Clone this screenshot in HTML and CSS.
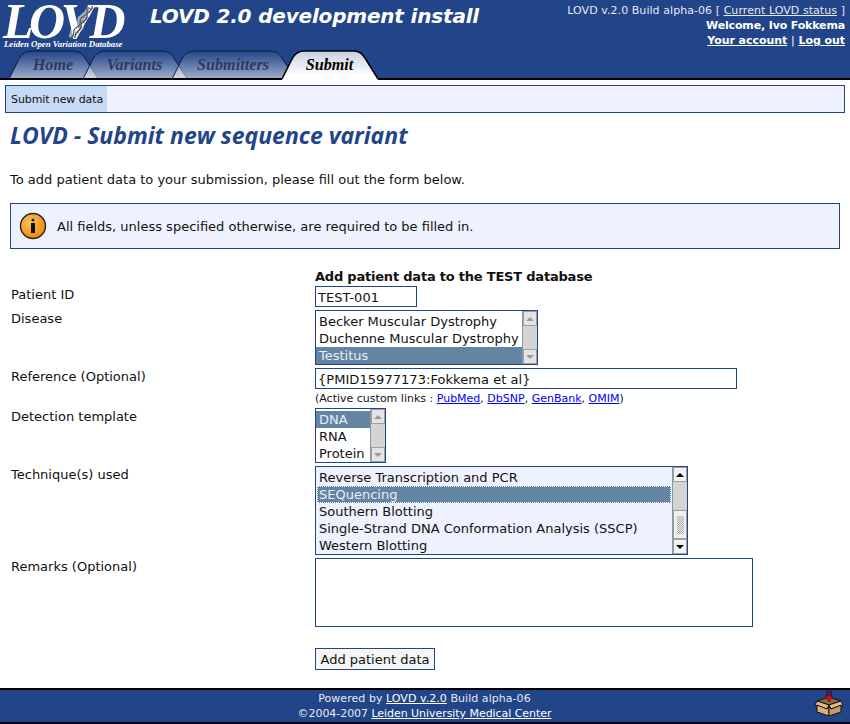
FILE: index.html
```html
<!DOCTYPE html>
<html lang="en">
<head>
<meta charset="utf-8">
<title>LOVD - Submit new sequence variant</title>
<link rel="stylesheet" href="styles.css">
</head>
<body>
<header class="header">
  <div class="header-top">
    <div class="logo">
      <div class="logo-word">LOVD</div>
      <svg class="helix" width="28" height="38" viewBox="0 0 28 38">
        <path d="M23 3L19 11L13 16L12 24L6 28L4 35" fill="none" stroke="#fff" stroke-width="7" opacity="0.550"/>
        <path d="M24 3C26 8 18 8 19 13C20 18 12 18 13 23C14 28 6 28 7 35" fill="none" stroke="#333" stroke-width="1.200"/>
        <path d="M20 2C15 6 24 9 16 13C8 17 16 21 9 24C2 28 9 31 3 35" fill="none" stroke="#555" stroke-width="1.200"/>
        <path d="M20 5l4 1M18 9l4 1M15 14l4 1M13 19l4 1M10 24l4 1M7 29l4 1" stroke="#777" stroke-width="1"/>
      </svg>
      <div class="logo-sub">Leiden Open Variation Database</div>
    </div>
    <div class="site-title">LOVD 2.0 development install</div>
    <div class="user-info">
      <div>LOVD v.2.0 Build alpha-06 [ <a href="#">Current LOVD status</a> ]</div>
      <div class="strong">Welcome, Ivo Fokkema</div>
      <div class="strong strong-links"><a href="#">Your account</a> <span class="sep">|</span> <a href="#">Log out</a></div>
    </div>
  </div>
  <nav class="tabs">
    <a class="tab tab-home" href="#">
      <svg class="tab-bg" width="89" height="28" viewBox="0 0 89 28">
        <defs><linearGradient id="g1" x1="0" y1="0" x2="0" y2="1"><stop offset="0" stop-color="#fff" stop-opacity="0"/><stop offset="1" stop-color="#fff" stop-opacity="0.550"/></linearGradient></defs>
        <path d="M0.500 28L10 9Q14 1 22 1H65Q72 1 76 8L88.500 28" fill="url(#g1)" stroke="#0d1c3d" stroke-width="1"/>
      </svg>
      <span>Home</span>
    </a>
    <a class="tab tab-variants" href="#">
      <svg class="tab-bg" width="104" height="28" viewBox="0 0 104 28">
        <path d="M0.500 28L10 9Q14 1 22 1H80Q87 1 91 8L103.500 28" fill="url(#g1)" stroke="#0d1c3d" stroke-width="1"/>
      </svg>
      <span>Variants</span>
    </a>
    <a class="tab tab-submitters" href="#">
      <svg class="tab-bg" width="123" height="28" viewBox="0 0 123 28">
        <path d="M0.500 28L10 9Q14 1 22 1H99Q106 1 110 8L122.500 28" fill="url(#g1)" stroke="#0d1c3d" stroke-width="1"/>
      </svg>
      <span>Submitters</span>
    </a>
    <a class="tab tab-submit" href="#">
      <svg class="tab-bg" width="96" height="30" viewBox="0 0 96 30">
        <defs><linearGradient id="g2" x1="0" y1="0" x2="0" y2="1"><stop offset="0" stop-color="#c6d0e4"/><stop offset="0.850" stop-color="#ffffff"/></linearGradient></defs>
        <path d="M0 30L10 9Q14 1 22 1H72Q79 1 83 8L96 30Z" fill="url(#g2)"/>
        <path d="M0.500 28L10 9Q14 1 22 1H72Q79 1 83 8L95.500 28" fill="none" stroke="#000" stroke-width="1.600"/>
      </svg>
      <span>Submit</span>
    </a>
  </nav>
</header>

<div class="submenu"><a class="submenu-item" href="#">Submit new data</a></div>

<main class="content">
  <h1 class="page-title">LOVD - Submit new sequence variant</h1>
  <p class="intro">To add patient data to your submission, please fill out the form below.</p>
  <div class="notice">
    <svg class="notice-icon" width="28" height="28" viewBox="0 0 28 28">
      <defs><radialGradient id="g3" cx="0.4" cy="0.35" r="0.7"><stop offset="0" stop-color="#ffc060"/><stop offset="1" stop-color="#ee8800"/></radialGradient></defs>
      <circle cx="14" cy="14" r="12.500" fill="url(#g3)" stroke="#222" stroke-width="1.400"/>
      <circle cx="14" cy="8" r="1.600" fill="#222"/>
      <rect x="12" y="11" width="4" height="10" fill="#111"/>
    </svg>
    <span>All fields, unless specified otherwise, are required to be filled in.</span>
  </div>

  <form class="form">
    <div class="form-heading">Add patient data to the TEST database</div>

    <label class="form-label form-label-first">Patient ID</label>
    <div class="field field-first"><div class="input input-id">TEST-001</div></div>

    <label class="form-label">Disease</label>
    <div class="field">
      <div class="listbox listbox-disease">
        <div class="options">
          <div class="option">Becker Muscular Dystrophy</div>
          <div class="option">Duchenne Muscular Dystrophy</div>
          <div class="option selected">Testitus</div>
        </div>
        <div class="scrollbar">
          <div class="sb-btn sb-up"></div><div class="sb-track"></div><div class="sb-btn sb-down"></div>
        </div>
      </div>
    </div>

    <label class="form-label">Reference (Optional)</label>
    <div class="field">
      <div class="input input-ref">{PMID15977173:Fokkema et al}</div>
      <div class="hint">(Active custom links : <a href="#">PubMed</a>, <a href="#">DbSNP</a>, <a href="#">GenBank</a>, <a href="#">OMIM</a>)</div>
    </div>

    <label class="form-label">Detection template</label>
    <div class="field">
      <div class="listbox listbox-template">
        <div class="options">
          <div class="option selected">DNA</div>
          <div class="option">RNA</div>
          <div class="option">Protein</div>
        </div>
        <div class="scrollbar">
          <div class="sb-btn sb-up"></div><div class="sb-track"></div><div class="sb-btn sb-down"></div>
        </div>
      </div>
    </div>

    <label class="form-label">Technique(s) used</label>
    <div class="field">
      <div class="listbox listbox-technique">
        <div class="options options-tinted">
          <div class="option">Reverse Transcription and PCR</div>
          <div class="option selected focused">SEQuencing</div>
          <div class="option">Southern Blotting</div>
          <div class="option">Single-Strand DNA Conformation Analysis (SSCP)</div>
          <div class="option">Western Blotting</div>
        </div>
        <div class="scrollbar scrollbar-active">
          <div class="sb-btn sb-up"></div><div class="sb-track"></div><div class="sb-thumb"></div><div class="sb-btn sb-down"></div>
        </div>
      </div>
    </div>

    <label class="form-label">Remarks (Optional)</label>
    <div class="field"><div class="textarea"></div></div>

    <div class="form-submit"><button class="button" type="button">Add patient data</button></div>
  </form>
</main>

<footer class="footer">
  <div class="footer-text">
    <div class="footer-line-1">Powered by <a href="#">LOVD v.2.0</a> Build alpha-06</div>
    <div class="footer-line-2">©2004-2007 <a href="#">Leiden University Medical Center</a></div>
  </div>
  <svg class="footer-icon" width="30" height="26" viewBox="0 0 30 26">
    <path d="M3 11L15 7L27 11L15 15Z" fill="#8a6a3c" stroke="#111"/>
    <path d="M3 11L1 15L13 19L15 15Z" fill="#e3bc85" stroke="#111"/>
    <path d="M27 11L29 15L17 19L15 15Z" fill="#e3bc85" stroke="#111"/>
    <path d="M3 15V22L15 26V16L13 19Z" fill="#d8b07a" stroke="#111"/>
    <path d="M27 15V22L15 26V16L17 19Z" fill="#c49a64" stroke="#111"/>
    <rect x="12.500" y="1" width="5" height="6" fill="#5a1a50" stroke="#1a1a3a" stroke-width="0.700"/>
    <path d="M11.500 6H18.500L15 12Z" fill="#dd0a10" stroke="#40101a" stroke-width="0.500"/>
  </svg>
</footer>
</body>
</html>
```
FILE: styles.css
```css
* { box-sizing: border-box; }
html, body { margin: 0; padding: 0; }
body {
  width: 850px;
  height: 724px;
  overflow: hidden;
  background: #fff;
  color: #111;
  font: 13px/17px "DejaVu Sans", Verdana, sans-serif;
  display: flex;
  flex-direction: column;
}
.header {
  height: 80px;
  background: #224488;
  border-bottom: 2px solid #000;
  display: flex;
  flex-direction: column;
  justify-content: space-between;
  color: #fff;
}
.header-top { display: flex; height: 50px; position: relative; }
.logo { position: relative; width: 150px; flex: none; }
.logo-word {
  position: absolute;
  left: 3px;
  top: 3px;
  font: italic bold 50px/36px "Liberation Serif", serif;
  letter-spacing: -4.5px;
  color: #fff;
}
.helix { position: absolute; left: 68px; top: 3px; }
.logo-sub {
  position: absolute;
  left: 4px;
  top: 39px;
  font: italic bold 8.8px/10px "Liberation Serif", serif;
  white-space: nowrap;
}
.site-title {
  font: italic bold 20px/26px "DejaVu Sans", sans-serif;
  letter-spacing: -0.18px;
  padding-top: 3px;
  white-space: nowrap;
  color: #fff;
}
.user-info {
  margin-left: auto;
  padding: 3px 5px 0 0;
  text-align: right;
  font-size: 11px;
  line-height: 15px;
  color: #e6e9f2;
  letter-spacing: 0.06px;
}
.user-info a { color: inherit; }
.user-info .strong { font-weight: bold; color: #fff; letter-spacing: -0.15px; }
.user-info .strong a { color: #fff; }
.user-info .strong-links { letter-spacing: -0.05px; }
.sep { font-weight: normal; }
.tabs { display: flex; height: 28px; padding-left: 9px; }
.tab {
  position: relative;
  display: flex;
  align-items: center;
  justify-content: center;
  height: 28px;
  padding: 1px 1px 0 0;
  margin-right: -15px;
  font: italic bold 16.2px/20px "Liberation Serif", serif;
  color: #2b3a60;
  text-decoration: none;
}
.tab span { position: relative; }
.tab-bg { position: absolute; left: 0; top: 0; }
.tab-home { width: 89px; margin-right: -15px; }
.tab-variants { width: 104px; margin-right: -15px; }
.tab-submitters { width: 123px; margin-right: -13px; }
.tab-submit { width: 96px; color: #000; }
.submenu {
  margin: 5px 5px 0;
  height: 28px;
  background: #eef1fe;
  border: 1px solid #224488;
  display: flex;
}
.submenu-item {
  background: #c6d9f5;
  color: #111;
  font-size: 11px;
  line-height: 28px;
  padding: 0 4px 0 5px;
  letter-spacing: -0.1px;
  text-decoration: none;
}
.content { flex: 1; padding: 0 10px; min-height: 0; }
.page-title {
  margin: 7px 0 0;
  font: italic bold 23px/30px "Open Sans", sans-serif;
  color: #224488;
  white-space: nowrap;
}
.intro { margin: 21px 0 0; line-height: 17px; }
.notice {
  margin-top: 15px;
  height: 46px;
  background: #eef1fe;
  border: 1px solid #224488;
  display: flex;
  align-items: center;
  padding-left: 8px;
  gap: 10px;
}
.notice-icon { flex: none; }
.form {
  margin: 19px 0 0 1px;
  display: grid;
  grid-template-columns: 304px 1fr;
  row-gap: 3px;
}
.form-heading { grid-column: 2; font-weight: bold; line-height: 17px; margin-bottom: -3px; letter-spacing: -0.21px; }
.form-label { line-height: 17px; }
.form-label-first { padding-top: 1px; }
.field { min-width: 0; }
.field-first { margin-top: 1px; }
.input {
  height: 21px;
  border: 1px solid #224488;
  background: #fff;
  padding: 1px 2px 0;
  font-size: 13px;
  line-height: 19px;
  letter-spacing: 0.05px;
}
.input-id { width: 102px; }
.input-ref { width: 422px; }
.hint { font-size: 11px; line-height: 12px; padding-top: 4px; }
.hint a { color: #0000ee; }
.listbox { display: flex; border: 1px solid #224488; background: #fff; }
.listbox-disease { width: 223px; height: 55px; }
.listbox-template { width: 71px; height: 55px; }
.listbox-technique { width: 373px; height: 89px; }
.options { flex: 1; min-width: 0; display: flex; flex-direction: column; padding-top: 2px; }
.options-tinted { background: #eef1fe; }
.option { height: 17px; line-height: 17px; padding-left: 3px; white-space: nowrap; }
.option.selected { background: #6484a4; color: #e8eef5; }
.option.focused { outline: 1px dotted #fff; outline-offset: -1px; margin: 0 1px; padding-left: 2px; }
.scrollbar { width: 15px; flex: none; display: flex; flex-direction: column; background: #d4d4d4; border-left: 1px solid #8a94aa; }
.sb-btn { height: 15px; flex: none; background: #e4e4e4; border: 1px solid #a0a0a0; display: flex; align-items: center; justify-content: center; }
.sb-up::before { content: ""; border: 4px solid transparent; border-top: 0; border-bottom: 4px solid #9a9a9a; }
.sb-down::before { content: ""; border: 4px solid transparent; border-bottom: 0; border-top: 4px solid #9a9a9a; }
.sb-track { flex: 1; }
.scrollbar-active .sb-btn { background: #f2f2f2; }
.scrollbar-active .sb-up::before { border-bottom-color: #000; }
.scrollbar-active .sb-down::before { border-top-color: #000; }
.sb-thumb {
  height: 29px;
  flex: none;
  background: #eeeeee;
  border: 1px solid #a0a0a0;
  display: flex;
  align-items: center;
  justify-content: center;
}
.sb-thumb::before {
  content: "";
  width: 7px;
  height: 18px;
  background: repeating-conic-gradient(#a8a8a8 0 25%, #eeeeee 0 50%) 0 0/2px 2px;
}
.textarea { width: 438px; height: 69px; border: 1px solid #224488; background: #fff; }
.form-submit { grid-column: 2; margin-top: 18px; }
.button {
  height: 22px;
  width: 120px;
  padding: 1px 0 0;
  border: 1px solid #224488;
  background: #f5f5f5;
  color: #111;
  font: 13px/18px "DejaVu Sans", sans-serif;
}
.footer {
  height: 36px;
  flex: none;
  background: #224488;
  border-top: 2px solid #000;
  border-bottom: 2px solid #000;
  color: #e6e9f2;
  position: relative;
  text-align: center;
  font-size: 11px;
  line-height: 15px;
}
.footer a { color: #fff; }
.footer-text { padding: 1px 1px 0 0; }
.footer-line-1 { letter-spacing: 0.05px; }
.footer-line-2 { letter-spacing: -0.05px; }
.footer-icon { position: absolute; right: 6px; top: 0; }
```
